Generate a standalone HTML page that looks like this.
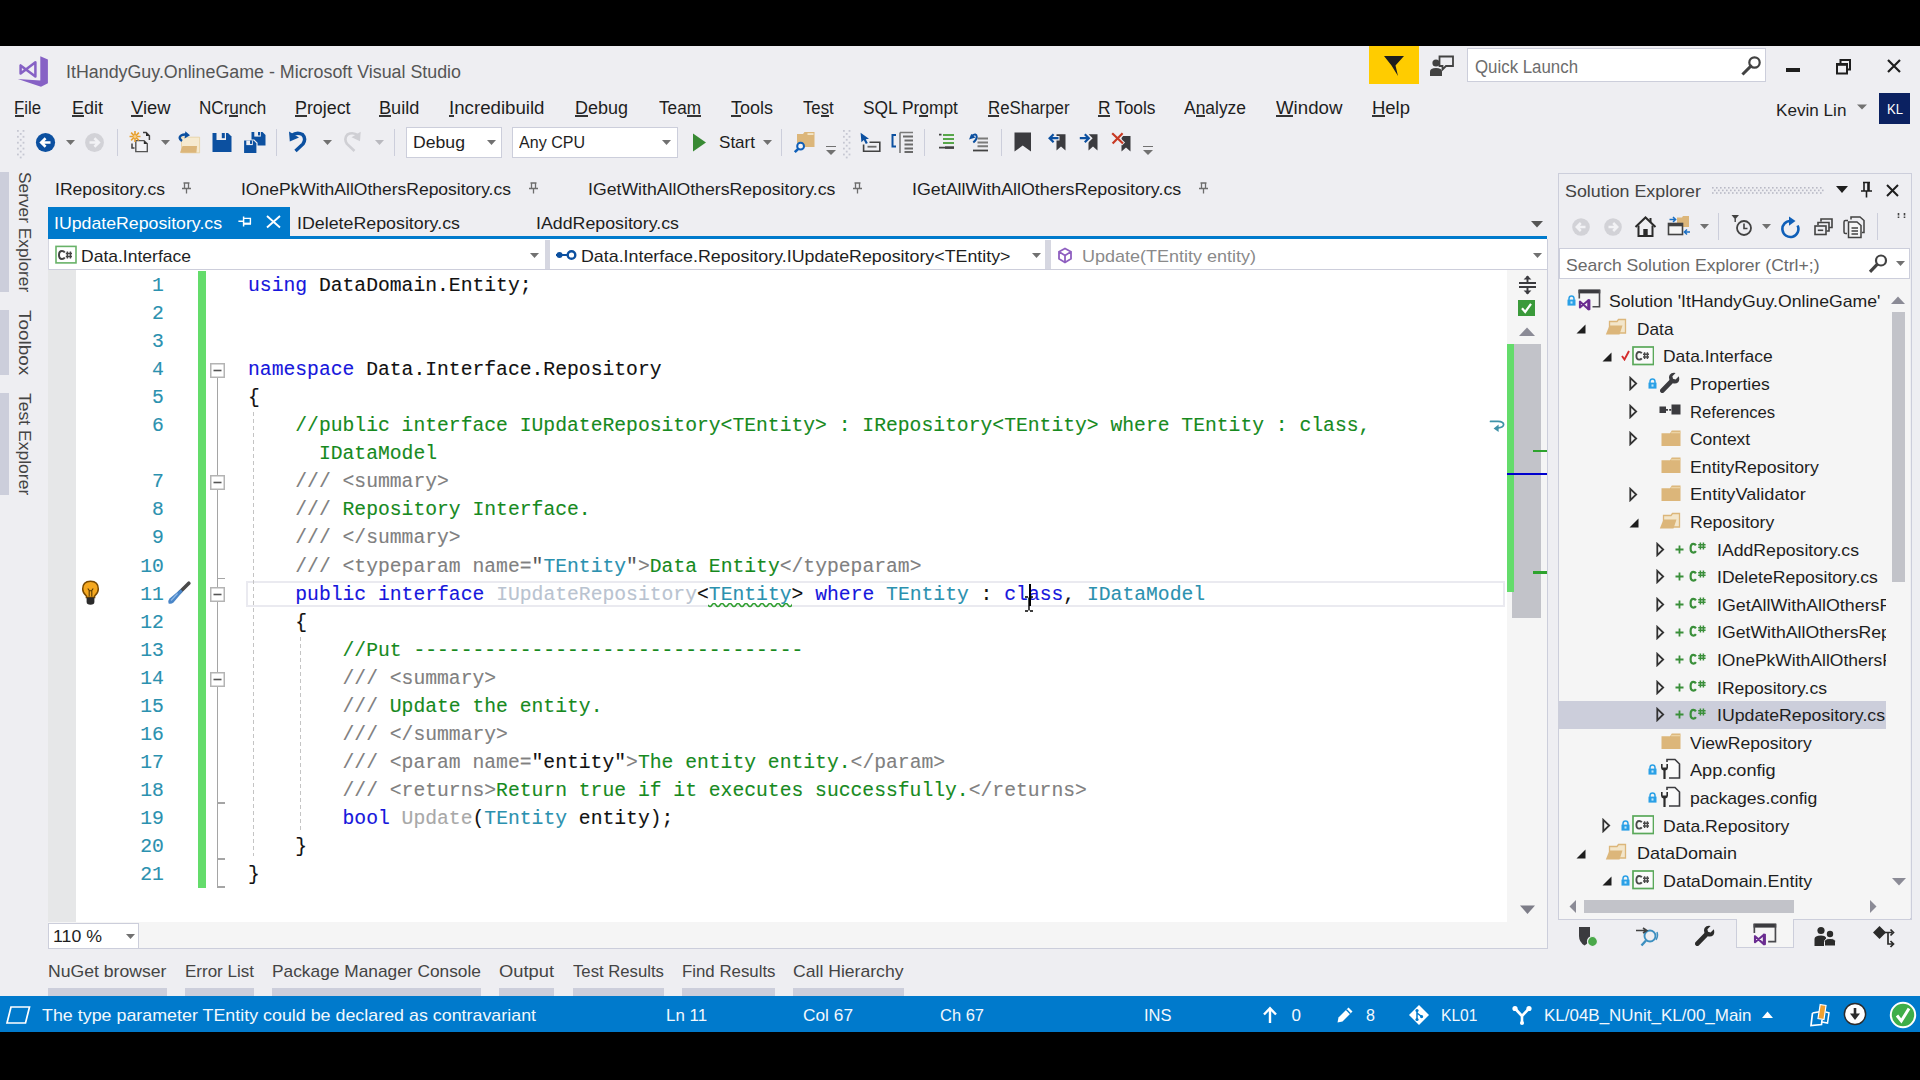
<!DOCTYPE html>
<html><head><meta charset="utf-8"><title>ItHandyGuy.OnlineGame - Microsoft Visual Studio</title>
<style>
html,body{margin:0;padding:0;background:#000;}
body{width:1920px;height:1080px;position:relative;overflow:hidden;font-family:"Liberation Sans",sans-serif;}
.b{position:absolute;display:block;}
.t{position:absolute;white-space:pre;line-height:1;transform-origin:0 0;font-family:"Liberation Sans",sans-serif;}
.c{position:absolute;white-space:pre;line-height:28px;height:28px;font-family:"Liberation Mono",monospace;font-size:19.7px;color:#111;-webkit-text-stroke:0.12px;}
.k{color:#1616dc}.q{color:#555}.ty{color:#2b91af}.cm{color:#178a1e}.x{color:#808080}.d1{color:#b9c3d0}.d2{color:#a8a8a8}
</style></head><body>
<div class="b" style="left:0px;top:46px;width:1920px;height:986px;background:#eeeef2;"></div>
<svg class="b" style="left:17px;top:55px;" width="32" height="33" viewBox="0 0 32 33"><path d="M0.8 24 L23.3 25.4 V1.2 L30.9 4.5 V28.3 L24 31.8 Z" fill="#8661c5"/>
<path d="M3.6 10.4 V18.6 L18.4 7.2 V21.4 Z" fill="none" stroke="#8661c5" stroke-width="2.5" stroke-linejoin="round"/></svg>
<div class="t " style="left:66.00px;top:63.00px;font-size:18px;color:#555;transform:scaleX(0.9912);">ItHandyGuy.OnlineGame - Microsoft Visual Studio</div>
<div class="b" style="left:1369px;top:46px;width:50px;height:38px;background:#ffcc00;"></div>
<svg class="b" style="left:1381px;top:53px;" width="26" height="26" viewBox="0 0 26 26"><path d="M3 3 H23 L14.5 12.5 L17 23 L10.5 12.5 Z" fill="#1e1e1e"/></svg>
<svg class="b" style="left:1429px;top:54px;" width="26" height="24" viewBox="0 0 26 24"><circle cx="7" cy="9" r="3.6" fill="#424242"/><path d="M1 22 V17.5 Q1 14 7 14 Q13 14 13 17.5 V22 Z" fill="#424242"/><path d="M10.5 2.5 H24 V12 H17 L13.5 15.5 V12 H10.5 Z" fill="none" stroke="#424242" stroke-width="1.8"/></svg>
<div class="b" style="left:1467px;top:48px;width:299px;height:34px;background:#fff;border:1px solid #cccedb;box-sizing:border-box;"></div>
<div class="t " style="left:1475.00px;top:59.00px;font-size:17.5px;color:#6d6d6d;transform:scaleX(0.9626);">Quick Launch</div>
<svg class="b" style="left:1740px;top:54px;" width="24" height="24" viewBox="0 0 24 24"><circle cx="14.5" cy="8.5" r="5.2" fill="none" stroke="#424242" stroke-width="2.2"/><path d="M10.8 12.2 L3.5 19.5" stroke="#424242" stroke-width="3" stroke-linecap="square"/></svg>
<div class="b" style="left:1786px;top:68px;width:14px;height:4px;background:#1e1e1e;"></div>
<svg class="b" style="left:1834px;top:57px;" width="20" height="20" viewBox="0 0 20 20"><path d="M6.5 6 V3 H16 V12.5 H13" fill="none" stroke="#1e1e1e" stroke-width="2"/><rect x="3" y="7" width="10" height="9.5" fill="none" stroke="#1e1e1e" stroke-width="2"/><path d="M3 7.5 H13" stroke="#1e1e1e" stroke-width="2.6"/></svg>
<svg class="b" style="left:1884px;top:56px;" width="20" height="20" viewBox="0 0 20 20"><path d="M4 4 L16 16 M16 4 L4 16" stroke="#1e1e1e" stroke-width="2.2"/></svg>
<div class="t " style="left:14.20px;top:100.00px;font-size:17.5px;color:#1e1e1e;transform:scaleX(0.9558);">File</div>
<div class="b" style="left:14.5px;top:115.3px;width:9.6px;height:1.5px;background:#333;"></div>
<div class="t " style="left:72.00px;top:100.00px;font-size:17.5px;color:#1e1e1e;transform:scaleX(1.0290);">Edit</div>
<div class="b" style="left:72.3px;top:115.3px;width:11.4px;height:1.5px;background:#333;"></div>
<div class="t " style="left:131.00px;top:100.00px;font-size:17.5px;color:#1e1e1e;transform:scaleX(1.0490);">View</div>
<div class="b" style="left:131.3px;top:115.3px;width:11.6px;height:1.5px;background:#333;"></div>
<div class="t " style="left:198.70px;top:100.00px;font-size:17.5px;color:#1e1e1e;transform:scaleX(0.9754);">NCrunch</div>
<div class="b" style="left:229.3px;top:115.3px;width:8.9px;height:1.5px;background:#333;"></div>
<div class="t " style="left:295.00px;top:100.00px;font-size:17.5px;color:#1e1e1e;transform:scaleX(1.0202);">Project</div>
<div class="b" style="left:295.3px;top:115.3px;width:11.3px;height:1.5px;background:#333;"></div>
<div class="t " style="left:378.70px;top:100.00px;font-size:17.5px;color:#1e1e1e;transform:scaleX(1.0367);">Build</div>
<div class="b" style="left:379.0px;top:115.3px;width:11.5px;height:1.5px;background:#333;"></div>
<div class="t " style="left:449.00px;top:100.00px;font-size:17.5px;color:#1e1e1e;transform:scaleX(1.0670);">Incredibuild</div>
<div class="b" style="left:449.3px;top:115.3px;width:4.6px;height:1.5px;background:#333;"></div>
<div class="t " style="left:575.00px;top:100.00px;font-size:17.5px;color:#1e1e1e;transform:scaleX(1.0266);">Debug</div>
<div class="b" style="left:575.3px;top:115.3px;width:12.4px;height:1.5px;background:#333;"></div>
<div class="t " style="left:659.00px;top:100.00px;font-size:17.5px;color:#1e1e1e;transform:scaleX(0.9825);">Team</div>
<div class="b" style="left:687.0px;top:115.3px;width:13.7px;height:1.5px;background:#333;"></div>
<div class="t " style="left:730.60px;top:100.00px;font-size:17.5px;color:#1e1e1e;transform:scaleX(1.0275);">Tools</div>
<div class="b" style="left:730.9px;top:115.3px;width:10.4px;height:1.5px;background:#333;"></div>
<div class="t " style="left:803.00px;top:100.00px;font-size:17.5px;color:#1e1e1e;transform:scaleX(0.9556);">Test</div>
<div class="b" style="left:821.0px;top:115.3px;width:7.8px;height:1.5px;background:#333;"></div>
<div class="t " style="left:862.60px;top:100.00px;font-size:17.5px;color:#1e1e1e;transform:scaleX(0.9924);">SQL Prompt</div>
<div class="b" style="left:919.2px;top:115.3px;width:9.1px;height:1.5px;background:#333;"></div>
<div class="t " style="left:987.50px;top:100.00px;font-size:17.5px;color:#1e1e1e;transform:scaleX(0.9631);">ReSharper</div>
<div class="b" style="left:987.8px;top:115.3px;width:11.6px;height:1.5px;background:#333;"></div>
<div class="t " style="left:1098.00px;top:100.00px;font-size:17.5px;color:#1e1e1e;transform:scaleX(0.9914);">R Tools</div>
<div class="b" style="left:1098.3px;top:115.3px;width:11.9px;height:1.5px;background:#333;"></div>
<div class="t " style="left:1184.00px;top:100.00px;font-size:17.5px;color:#1e1e1e;transform:scaleX(0.9960);">Analyze</div>
<div class="b" style="left:1195.9px;top:115.3px;width:9.1px;height:1.5px;background:#333;"></div>
<div class="t " style="left:1275.50px;top:100.00px;font-size:17.5px;color:#1e1e1e;transform:scaleX(1.0661);">Window</div>
<div class="b" style="left:1275.8px;top:115.3px;width:17.0px;height:1.5px;background:#333;"></div>
<div class="t " style="left:1372.00px;top:100.00px;font-size:17.5px;color:#1e1e1e;transform:scaleX(1.0556);">Help</div>
<div class="b" style="left:1372.3px;top:115.3px;width:12.7px;height:1.5px;background:#333;"></div>
<div class="t " style="left:1775.50px;top:102.00px;font-size:17px;color:#1e1e1e;transform:scaleX(1.0071);">Kevin Lin</div>
<svg class="b" style="left:1856px;top:103px;" width="12" height="8" viewBox="0 0 12 8"><path d="M1 1.5 H11 L6 6.5 Z" fill="#717171"/></svg>
<div class="b" style="left:1879px;top:93px;width:31px;height:31px;background:#0b2161;"></div>
<div class="t " style="left:1886.50px;top:102.00px;font-size:14px;color:#fff;transform:scaleX(0.9343);">KL</div>
<svg class="b" style="left:16.5px;top:129.5px;" width="8" height="29" viewBox="0 0 8 29"><rect x="0" y="0.0" width="1.8" height="1.8" fill="#c6c7d2"/><rect x="5.6" y="0.0" width="1.8" height="1.8" fill="#c6c7d2"/><rect x="2.8" y="3.0" width="1.8" height="1.8" fill="#c6c7d2"/><rect x="0" y="5.9" width="1.8" height="1.8" fill="#c6c7d2"/><rect x="5.6" y="5.9" width="1.8" height="1.8" fill="#c6c7d2"/><rect x="2.8" y="8.9" width="1.8" height="1.8" fill="#c6c7d2"/><rect x="0" y="11.8" width="1.8" height="1.8" fill="#c6c7d2"/><rect x="5.6" y="11.8" width="1.8" height="1.8" fill="#c6c7d2"/><rect x="2.8" y="14.8" width="1.8" height="1.8" fill="#c6c7d2"/><rect x="0" y="17.7" width="1.8" height="1.8" fill="#c6c7d2"/><rect x="5.6" y="17.7" width="1.8" height="1.8" fill="#c6c7d2"/><rect x="2.8" y="20.7" width="1.8" height="1.8" fill="#c6c7d2"/><rect x="0" y="23.6" width="1.8" height="1.8" fill="#c6c7d2"/><rect x="5.6" y="23.6" width="1.8" height="1.8" fill="#c6c7d2"/><rect x="2.8" y="26.6" width="1.8" height="1.8" fill="#c6c7d2"/></svg>
<svg class="b" style="left:35px;top:132px;" width="21" height="21" viewBox="0 0 21 21"><circle cx="10.5" cy="10.5" r="9.6" fill="#0c50a0"/><path d="M15.5 10.5 H6.8 M10.6 6.2 L6.2 10.5 L10.6 14.8" fill="none" stroke="#fff" stroke-width="2.6"/></svg>
<svg class="b" style="left:65.5px;top:139.5px;" width="9" height="5" viewBox="0 0 9 5"><path d="M0 0 H9 L4.5 5 Z" fill="#717171"/></svg>
<svg class="b" style="left:84px;top:132px;" width="21" height="21" viewBox="0 0 21 21"><circle cx="10.5" cy="10.5" r="9.4" fill="#d2d2d7"/><path d="M5.5 10.5 H14.2 M10.4 6.2 L14.8 10.5 L10.4 14.8" fill="none" stroke="#f2f2f5" stroke-width="2.6"/></svg>
<div class="b" style="left:116.5px;top:129px;width:1px;height:27px;background:#cccedb;"></div>
<svg class="b" style="left:128px;top:129px;" width="24" height="26" viewBox="0 0 24 26"><path d="M15 3.6 H18.2 L21.4 6.8 V11" fill="none" stroke="#424242" stroke-width="1.5"/><path d="M18 3.4 L21.6 7 H18 Z" fill="#2b2b2b"/>
<path d="M7.8 11.6 H16 L19.3 14.8 V22.6 H7.8 Z" fill="#f3f3f6" stroke="#555" stroke-width="1.4"/><path d="M15.8 11.4 L19.5 15 H15.8 Z" fill="#2b2b2b"/>
<path d="M4 14.5 V19 H6.5" fill="none" stroke="#424242" stroke-width="1.5"/>
<path d="M7 2 V13 M1.5 7.5 H12.5 M3.1 3.6 L10.9 11.4 M10.9 3.6 L3.1 11.4" stroke="#e8a030" stroke-width="1.6"/><circle cx="7" cy="7.5" r="1.6" fill="#f6cf86"/></svg>
<svg class="b" style="left:160.5px;top:139.5px;" width="9" height="5" viewBox="0 0 9 5"><path d="M0 0 H9 L4.5 5 Z" fill="#717171"/></svg>
<svg class="b" style="left:176px;top:129px;" width="26" height="26" viewBox="0 0 26 26"><path d="M5.5 8.2 H23.6 V23.8 H5.5 Z" fill="#f6ead0" stroke="#e6cf9e" stroke-width="0.8"/>
<path d="M4 23.8 L6.5 17 H21 L20.4 23.8 Z" fill="#dcb67a"/>
<path d="M6 12 Q1.5 8.8 5.5 6.3 Q7.5 5.2 10.5 5.6" fill="none" stroke="#0c50a0" stroke-width="2.4"/><path d="M9.3 2.2 L14 6.2 L8.6 9.6 Z" fill="#0c50a0"/></svg>
<svg class="b" style="left:212px;top:132px;" width="20" height="21" viewBox="0 0 20 21"><path d="M0.5 1 H16 L19.5 4.5 V20 H0.5 Z" fill="#0c50a0"/><rect x="4.5" y="1" width="9.5" height="7" fill="#eeeef2"/><rect x="9.8" y="1" width="3" height="5.2" fill="#0c50a0"/></svg>
<svg class="b" style="left:243px;top:131px;" width="23" height="23" viewBox="0 0 23 23"><path d="M8.5 1 H19.5 L22.5 4 V14.5 H8.5 Z" fill="#0c50a0"/><rect x="11.3" y="1" width="6.5" height="4.6" fill="#eeeef2"/><rect x="15" y="1" width="2" height="3.4" fill="#0c50a0"/>
<path d="M0.5 9 H11 L14 12 V22.5 H0.5 Z" fill="#0c50a0" stroke="#eeeef2" stroke-width="1.2"/><rect x="3.3" y="9.5" width="6.5" height="4.6" fill="#eeeef2"/><rect x="7" y="9.5" width="2" height="3.4" fill="#0c50a0"/></svg>
<div class="b" style="left:276px;top:129px;width:1px;height:27px;background:#cccedb;"></div>
<svg class="b" style="left:287px;top:130px;" width="23" height="23" viewBox="0 0 23 23"><path d="M4.5 5.5 Q10 1.5 15.5 4.5 Q19.5 8.5 16 14 L8.5 21" fill="none" stroke="#0c50a0" stroke-width="3.4"/><path d="M2 1.4 L2.8 11.6 L12 7.4 Z" fill="#0c50a0"/></svg>
<svg class="b" style="left:322.5px;top:139.5px;" width="9" height="5" viewBox="0 0 9 5"><path d="M0 0 H9 L4.5 5 Z" fill="#717171"/></svg>
<svg class="b" style="left:341px;top:130px;" width="22" height="23" viewBox="0 0 22 23"><path d="M17.5 5.5 Q12 1.5 6.5 4.5 Q2.5 8.5 6 14 L13.5 21" fill="none" stroke="#cfcfd4" stroke-width="2.6"/><path d="M19.7 1.8 L19 11.2 L10.5 7.2 Z" fill="#cfcfd4"/></svg>
<svg class="b" style="left:375.0px;top:139.5px;" width="9" height="5" viewBox="0 0 9 5"><path d="M0 0 H9 L4.5 5 Z" fill="#b9b9bf"/></svg>
<div class="b" style="left:394px;top:129px;width:1px;height:27px;background:#cccedb;"></div>
<div class="b" style="left:406px;top:127px;width:96px;height:31px;background:#fff;border:1px solid #cccedb;box-sizing:border-box;"></div>
<div class="t " style="left:412.50px;top:134.00px;font-size:17px;color:#1e1e1e;transform:scaleX(1.0374);">Debug</div>
<svg class="b" style="left:486.5px;top:139.5px;" width="9" height="5" viewBox="0 0 9 5"><path d="M0 0 H9 L4.5 5 Z" fill="#717171"/></svg>
<div class="b" style="left:512px;top:127px;width:166px;height:31px;background:#fff;border:1px solid #cccedb;box-sizing:border-box;"></div>
<div class="t " style="left:519.00px;top:134.00px;font-size:17px;color:#1e1e1e;transform:scaleX(0.9445);">Any CPU</div>
<svg class="b" style="left:661.5px;top:139.5px;" width="9" height="5" viewBox="0 0 9 5"><path d="M0 0 H9 L4.5 5 Z" fill="#717171"/></svg>
<svg class="b" style="left:692px;top:133px;" width="15" height="19" viewBox="0 0 15 19"><path d="M1 0.5 L14 9.5 L1 18.5 Z" fill="#388a34"/></svg>
<div class="t " style="left:719.00px;top:134.00px;font-size:17px;color:#1e1e1e;transform:scaleX(1.0035);">Start</div>
<svg class="b" style="left:762.5px;top:139.5px;" width="9" height="5" viewBox="0 0 9 5"><path d="M0 0 H9 L4.5 5 Z" fill="#717171"/></svg>
<div class="b" style="left:781px;top:129px;width:1px;height:27px;background:#cccedb;"></div>
<svg class="b" style="left:792px;top:131px;" width="24" height="24" viewBox="0 0 24 24"><path d="M5 3 H11 L12.5 1 H22.5 V16 H5 Z" fill="#dcb67a"/><rect x="15.5" y="2.2" width="6" height="1.7" fill="#f6ead0"/><circle cx="8.6" cy="15.2" r="3.4" fill="#f4f4f8" stroke="#0f5fb8" stroke-width="2"/><path d="M6.2 17.8 L2.8 21.2" stroke="#0f5fb8" stroke-width="2.6"/></svg>
<div class="b" style="left:826px;top:145.5px;width:10px;height:1.6px;background:#717171;"></div>
<svg class="b" style="left:826px;top:149.5px;" width="10" height="5" viewBox="0 0 10 5"><path d="M0 0 H10 L5 5 Z" fill="#717171"/></svg>
<svg class="b" style="left:842.6px;top:129.5px;" width="8" height="29" viewBox="0 0 8 29"><rect x="0" y="0.0" width="1.8" height="1.8" fill="#c6c7d2"/><rect x="5.6" y="0.0" width="1.8" height="1.8" fill="#c6c7d2"/><rect x="2.8" y="3.0" width="1.8" height="1.8" fill="#c6c7d2"/><rect x="0" y="5.9" width="1.8" height="1.8" fill="#c6c7d2"/><rect x="5.6" y="5.9" width="1.8" height="1.8" fill="#c6c7d2"/><rect x="2.8" y="8.9" width="1.8" height="1.8" fill="#c6c7d2"/><rect x="0" y="11.8" width="1.8" height="1.8" fill="#c6c7d2"/><rect x="5.6" y="11.8" width="1.8" height="1.8" fill="#c6c7d2"/><rect x="2.8" y="14.8" width="1.8" height="1.8" fill="#c6c7d2"/><rect x="0" y="17.7" width="1.8" height="1.8" fill="#c6c7d2"/><rect x="5.6" y="17.7" width="1.8" height="1.8" fill="#c6c7d2"/><rect x="2.8" y="20.7" width="1.8" height="1.8" fill="#c6c7d2"/><rect x="0" y="23.6" width="1.8" height="1.8" fill="#c6c7d2"/><rect x="5.6" y="23.6" width="1.8" height="1.8" fill="#c6c7d2"/><rect x="2.8" y="26.6" width="1.8" height="1.8" fill="#c6c7d2"/></svg>
<svg class="b" style="left:860px;top:132px;" width="22" height="22" viewBox="0 0 22 22"><path d="M0.6 0.8 L1.4 10.2 L3.8 8 L5.8 12 L7.8 11 L5.8 7.2 L9 6.8 Z" fill="#0c50a0"/><path d="M3.6 12.5 V19.2 H19.8 V10.2 H9.5" fill="none" stroke="#424242" stroke-width="1.6"/><path d="M7.5 14.7 H16.5" stroke="#6a6a6a" stroke-width="1.8"/></svg>
<svg class="b" style="left:891px;top:131px;" width="24" height="24" viewBox="0 0 24 24"><path d="M5 4 H1.5 V15.5 H5" fill="none" stroke="#0c50a0" stroke-width="2"/><path d="M9 1.5 H22 M9 1.5 V22" fill="none" stroke="#7a7a7a" stroke-width="1.6"/><path d="M12 5.5 H22 M13.5 9.5 H22 M13.5 13.5 H22 M13.5 17.5 H22 M13.5 21 H22" stroke="#6a6a6a" stroke-width="1.8"/></svg>
<div class="b" style="left:924px;top:129px;width:1px;height:27px;background:#cccedb;"></div>
<svg class="b" style="left:938px;top:133px;" width="18" height="17" viewBox="0 0 18 17"><path d="M1 1.6 H3.5 M1 14.6 H16" stroke="#424242" stroke-width="1.8"/><path d="M5 2 H16 M5 6 H16 M5 10 H16" stroke="#57a64a" stroke-width="2.2"/><path d="M7 14.6 H16" stroke="#424242" stroke-width="2.4"/></svg>
<svg class="b" style="left:967px;top:132px;" width="22" height="20" viewBox="0 0 22 20"><path d="M2 7.5 L4.2 2 L8.6 5.6 Z" fill="#0c50a0"/><path d="M4.5 4 Q9.5 0.5 9.8 5 Q9.8 7.5 6.3 10.5" fill="none" stroke="#0c50a0" stroke-width="2"/><path d="M10.5 6.5 H21 M10.5 10.5 H21 M10.5 14.3 H21" stroke="#7a7a7a" stroke-width="2"/><path d="M6 18.5 H21" stroke="#424242" stroke-width="1.8"/></svg>
<div class="b" style="left:1001px;top:129px;width:1px;height:27px;background:#cccedb;"></div>
<svg class="b" style="left:1014px;top:132px;" width="18" height="20" viewBox="0 0 18 20"><path d="M0.5 0.5 H17 V19.5 L8.7 13.6 L0.5 19.5 Z" fill="#3b3b3f"/></svg>
<svg class="b" style="left:1048px;top:133px;" width="19" height="18" viewBox="0 0 19 18"><path d="M8.5 1.2 H17.5 V17.5 L13 13.4 L8.5 17.5 Z" fill="#3b3b3f"/><path d="M1 5.2 H11.5 M5.5 0.8 L1.2 5.2 L5.5 9.6" fill="none" stroke="#eeeef2" stroke-width="4.6"/><path d="M1.6 5.2 H10.5 M5.6 1.2 L1.6 5.2 L5.6 9.2" fill="none" stroke="#0c50a0" stroke-width="2.2"/></svg>
<svg class="b" style="left:1079px;top:133px;" width="20" height="18" viewBox="0 0 20 18"><path d="M9.5 1.2 H18.5 V17.5 L14 13.4 L9.5 17.5 Z" fill="#3b3b3f"/><path d="M0 5.2 H10.5 M6 0.8 L10.4 5.2 L6 9.6" fill="none" stroke="#eeeef2" stroke-width="4.6"/><path d="M0.8 5.2 H9.6 M5.8 1.2 L9.8 5.2 L5.8 9.2" fill="none" stroke="#0c50a0" stroke-width="2.2"/></svg>
<svg class="b" style="left:1111px;top:132px;" width="21" height="20" viewBox="0 0 21 20"><path d="M10.5 4 H19.5 V19.5 L15 15.6 L10.5 19.5 Z" fill="#3b3b3f"/><path d="M1 1 L12.5 12 M12 1 L1.5 12" stroke="#eeeef2" stroke-width="4.4"/><path d="M1.2 1.2 L12 11.5 M11.6 1.2 L1.6 11.5" stroke="#c83a24" stroke-width="2.2"/></svg>
<div class="b" style="left:1143px;top:145.5px;width:10px;height:1.6px;background:#717171;"></div>
<svg class="b" style="left:1143px;top:149.5px;" width="10" height="5" viewBox="0 0 10 5"><path d="M0 0 H10 L5 5 Z" fill="#717171"/></svg>
<div class="b" style="left:0px;top:172px;width:9px;height:120px;background:#cccedb;"></div>
<div class="t" style="left:33.27px;top:172.40px;font-size:16.5px;color:#444;transform:rotate(90deg) scaleX(1.0486);">Server Explorer</div>
<div class="b" style="left:0px;top:310px;width:9px;height:65px;background:#cccedb;"></div>
<div class="t" style="left:33.27px;top:310.40px;font-size:16.5px;color:#444;transform:rotate(90deg) scaleX(1.1464);">Toolbox</div>
<div class="b" style="left:0px;top:393px;width:9px;height:102px;background:#cccedb;"></div>
<div class="t" style="left:33.27px;top:393.40px;font-size:16.5px;color:#444;transform:rotate(90deg) scaleX(1.0618);">Test Explorer</div>
<div class="t " style="left:55.00px;top:181.00px;font-size:17px;color:#1e1e1e;transform:scaleX(1.0329);">IRepository.cs</div>
<svg class="b" style="left:180.5px;top:182px;" width="11" height="12" viewBox="0 0 11 12"><path d="M2.5 1 H8.5 M3.5 1 V6 M7.5 1 V6 M1 6.5 H10 M5.5 6.5 V11.5" fill="none" stroke="#6d6d6d" stroke-width="1.3"/></svg>
<div class="t " style="left:241.00px;top:181.00px;font-size:17px;color:#1e1e1e;transform:scaleX(1.0291);">IOnePkWithAllOthersRepository.cs</div>
<svg class="b" style="left:527.5px;top:182px;" width="11" height="12" viewBox="0 0 11 12"><path d="M2.5 1 H8.5 M3.5 1 V6 M7.5 1 V6 M1 6.5 H10 M5.5 6.5 V11.5" fill="none" stroke="#6d6d6d" stroke-width="1.3"/></svg>
<div class="t " style="left:587.70px;top:181.00px;font-size:17px;color:#1e1e1e;transform:scaleX(1.0402);">IGetWithAllOthersRepository.cs</div>
<svg class="b" style="left:851.5px;top:182px;" width="11" height="12" viewBox="0 0 11 12"><path d="M2.5 1 H8.5 M3.5 1 V6 M7.5 1 V6 M1 6.5 H10 M5.5 6.5 V11.5" fill="none" stroke="#6d6d6d" stroke-width="1.3"/></svg>
<div class="t " style="left:911.50px;top:181.00px;font-size:17px;color:#1e1e1e;transform:scaleX(1.0490);">IGetAllWithAllOthersRepository.cs</div>
<svg class="b" style="left:1197.5px;top:182px;" width="11" height="12" viewBox="0 0 11 12"><path d="M2.5 1 H8.5 M3.5 1 V6 M7.5 1 V6 M1 6.5 H10 M5.5 6.5 V11.5" fill="none" stroke="#6d6d6d" stroke-width="1.3"/></svg>
<div class="b" style="left:48px;top:207px;width:242px;height:30px;background:#007acc;"></div>
<div class="t " style="left:54.00px;top:215.00px;font-size:17px;color:#fff;transform:scaleX(1.0419);">IUpdateRepository.cs</div>
<svg class="b" style="left:238px;top:216px;" width="14" height="11" viewBox="0 0 14 11"><path d="M0.4 5.3 H5.6 M5.6 0.6 V10.4" fill="none" stroke="#fff" stroke-width="1.5"/><path d="M5.6 2.4 H12.4 V7.4 H5.6" fill="none" stroke="#fff" stroke-width="1.4"/><path d="M5.6 7.8 H13" stroke="#fff" stroke-width="2"/></svg>
<svg class="b" style="left:265.5px;top:215.3px;" width="15" height="13.5" viewBox="0 0 15 13.5"><path d="M1 1 L14 12.5 M14 1 L1 12.5" stroke="#fff" stroke-width="1.9"/></svg>
<div class="t " style="left:297.00px;top:215.00px;font-size:17px;color:#1e1e1e;transform:scaleX(1.0474);">IDeleteRepository.cs</div>
<div class="t " style="left:536.00px;top:215.00px;font-size:17px;color:#1e1e1e;transform:scaleX(1.0457);">IAddRepository.cs</div>
<svg class="b" style="left:1531px;top:220.5px;" width="12" height="7" viewBox="0 0 12 7"><path d="M0 0 H12 L6 6.5 Z" fill="#555"/></svg>
<div class="b" style="left:48px;top:236px;width:1499px;height:2.6px;background:#007acc;"></div>
<div class="b" style="left:48px;top:238.6px;width:1499px;height:31.4px;background:#fff;"></div>
<div class="b" style="left:48px;top:269px;width:1499px;height:1.8px;background:#cdcedb;"></div>
<div class="b" style="left:48px;top:239px;width:1px;height:31px;background:#d5d6e0;"></div>
<div class="b" style="left:544.5px;top:240px;width:5.5px;height:29px;background:#d6d7e1;"></div>
<div class="b" style="left:1045px;top:240px;width:5.5px;height:29px;background:#d6d7e1;"></div>
<svg class="b" style="left:55px;top:245px;" width="22" height="20" viewBox="0 0 22 20"><rect x="1" y="1.4" width="20" height="16.5" fill="#fff" stroke="#68b268" stroke-width="1.6"/><path d="M9.8 7.5 Q8.8 6 7 6 Q4 6 4 10 Q4 14 7 14 Q8.8 14 9.8 12.5" fill="none" stroke="#424242" stroke-width="2"/><path d="M12.4 6.5 V13.5 M15.4 6.5 V13.5 M10.8 8.6 H17 M10.8 11.4 H17" stroke="#424242" stroke-width="1.5"/></svg>
<div class="t " style="left:81.00px;top:248.00px;font-size:17px;color:#1e1e1e;transform:scaleX(1.0304);">Data.Interface</div>
<svg class="b" style="left:530.1px;top:252.5px;" width="9" height="5" viewBox="0 0 9 5"><path d="M0 0 H9 L4.5 5 Z" fill="#717171"/></svg>
<svg class="b" style="left:555px;top:249px;" width="23" height="12" viewBox="0 0 23 12"><path d="M1 6 H13" stroke="#0c50a0" stroke-width="2"/><circle cx="4.5" cy="6" r="3" fill="#0c50a0"/><circle cx="16.5" cy="6" r="3.8" fill="#fff" stroke="#0c50a0" stroke-width="2.4"/></svg>
<div class="t " style="left:581.00px;top:248.00px;font-size:17px;color:#1e1e1e;transform:scaleX(1.0482);">Data.Interface.Repository.IUpdateRepository&lt;TEntity&gt;</div>
<svg class="b" style="left:1031.5px;top:252.5px;" width="9" height="5" viewBox="0 0 9 5"><path d="M0 0 H9 L4.5 5 Z" fill="#717171"/></svg>
<svg class="b" style="left:1056.5px;top:246.5px;" width="16" height="17" viewBox="0 0 16 17"><path d="M8 1.5 L14 4.8 V11.8 L8 15.5 L2 11.8 V4.8 Z M2.4 5 L8 8.4 L13.6 5 M8 8.4 V15" fill="none" stroke="#8f5fc0" stroke-width="1.8"/></svg>
<div class="t " style="left:1082.00px;top:248.00px;font-size:17px;color:#8a8a8a;transform:scaleX(1.0586);">Update(TEntity entity)</div>
<svg class="b" style="left:1532.5px;top:252.5px;" width="9" height="5" viewBox="0 0 9 5"><path d="M0 0 H9 L4.5 5 Z" fill="#717171"/></svg>
<div class="b" style="left:48px;top:270px;width:1499px;height:652px;background:#fff;"></div>
<div class="b" style="left:48px;top:270px;width:28px;height:652px;background:#e6e7e8;"></div>
<div class="b" style="left:198px;top:271px;width:8px;height:617px;background:#64dc6b;"></div>
<div class="b" style="left:246px;top:580.9px;width:1259px;height:26.5px;background:#fff;border:2px solid #eaeaf0;box-sizing:border-box;"></div>
<div class="c ty" style="left:151.98px;top:272.00px;">1</div>
<div class="c ty" style="left:151.98px;top:300.05px;">2</div>
<div class="c ty" style="left:151.98px;top:328.10px;">3</div>
<div class="c ty" style="left:151.98px;top:356.15px;">4</div>
<div class="c ty" style="left:151.98px;top:384.20px;">5</div>
<div class="c ty" style="left:151.98px;top:412.25px;">6</div>
<div class="c ty" style="left:151.98px;top:468.35px;">7</div>
<div class="c ty" style="left:151.98px;top:496.40px;">8</div>
<div class="c ty" style="left:151.98px;top:524.45px;">9</div>
<div class="c ty" style="left:140.16px;top:552.50px;">10</div>
<div class="c ty" style="left:140.16px;top:580.55px;">11</div>
<div class="c ty" style="left:140.16px;top:608.60px;">12</div>
<div class="c ty" style="left:140.16px;top:636.65px;">13</div>
<div class="c ty" style="left:140.16px;top:664.70px;">14</div>
<div class="c ty" style="left:140.16px;top:692.75px;">15</div>
<div class="c ty" style="left:140.16px;top:720.80px;">16</div>
<div class="c ty" style="left:140.16px;top:748.85px;">17</div>
<div class="c ty" style="left:140.16px;top:776.90px;">18</div>
<div class="c ty" style="left:140.16px;top:804.95px;">19</div>
<div class="c ty" style="left:140.16px;top:833.00px;">20</div>
<div class="c ty" style="left:140.16px;top:861.05px;">21</div>
<div class="c" style="left:248px;top:272.00px;"><span class="k">using</span> DataDomain.Entity;</div>
<div class="c" style="left:248px;top:356.15px;"><span class="k">namespace</span> Data.Interface.Repository</div>
<div class="c" style="left:248px;top:384.20px;">{</div>
<div class="c" style="left:248px;top:412.25px;">    <span class="cm">//public interface IUpdateRepository&lt;TEntity&gt; : IRepository&lt;TEntity&gt; where TEntity : class,</span></div>
<div class="c" style="left:248px;top:440.30px;">      <span class="cm">IDataModel</span></div>
<div class="c" style="left:248px;top:468.35px;">    <span class="x">/// &lt;summary&gt;</span></div>
<div class="c" style="left:248px;top:496.40px;">    <span class="x">/// </span><span class="cm">Repository Interface.</span></div>
<div class="c" style="left:248px;top:524.45px;">    <span class="x">/// &lt;/summary&gt;</span></div>
<div class="c" style="left:248px;top:552.50px;">    <span class="x">/// &lt;typeparam name=</span><span class="q">&quot;</span><span class="ty">TEntity</span><span class="q">&quot;</span><span class="x">&gt;</span><span class="cm">Data Entity</span><span class="x">&lt;/typeparam&gt;</span></div>
<div class="c" style="left:248px;top:580.55px;">    <span class="k">public</span> <span class="k">interface</span> <span class="d1">IUpdateRepository</span>&lt;<span class="ty">TEntity</span>&gt; <span class="k">where</span> <span class="ty">TEntity</span> : <span class="k">class</span>, <span class="ty">IDataModel</span></div>
<div class="c" style="left:248px;top:608.60px;">    {</div>
<div class="c" style="left:248px;top:636.65px;">        <span class="cm">//Put ---------------------------------</span></div>
<div class="c" style="left:248px;top:664.70px;">        <span class="x">/// &lt;summary&gt;</span></div>
<div class="c" style="left:248px;top:692.75px;">        <span class="x">/// </span><span class="cm">Update the entity.</span></div>
<div class="c" style="left:248px;top:720.80px;">        <span class="x">/// &lt;/summary&gt;</span></div>
<div class="c" style="left:248px;top:748.85px;">        <span class="x">/// &lt;param name=</span>&quot;entity&quot;<span class="x">&gt;</span><span class="cm">The entity entity.</span><span class="x">&lt;/param&gt;</span></div>
<div class="c" style="left:248px;top:776.90px;">        <span class="x">/// &lt;returns&gt;</span><span class="cm">Return true if it executes successfully.</span><span class="x">&lt;/returns&gt;</span></div>
<div class="c" style="left:248px;top:804.95px;">        <span class="k">bool</span> <span class="d2">Update</span>(<span class="ty">TEntity</span> entity);</div>
<div class="c" style="left:248px;top:833.00px;">    }</div>
<div class="c" style="left:248px;top:861.05px;">}</div>
<svg class="b" style="left:708px;top:602.5px;overflow:hidden;" width="84" height="6" viewBox="0 0 84 6"><path d="M0 2 q2 3 4 0 q2 -3 4 0 q2 3 4 0 q2 -3 4 0 q2 3 4 0 q2 -3 4 0 q2 3 4 0 q2 -3 4 0 q2 3 4 0 q2 -3 4 0 q2 3 4 0 q2 -3 4 0 q2 3 4 0 q2 -3 4 0 q2 3 4 0 q2 -3 4 0 q2 3 4 0 q2 -3 4 0 q2 3 4 0 q2 -3 4 0 q2 3 4 0 q2 -3 4 0" fill="none" stroke="#2e9e2e" stroke-width="1.5"/></svg>
<div class="b" style="left:1029px;top:583.5px;width:2px;height:22px;background:#000;"></div>
<svg class="b" style="left:1024px;top:596px;" width="10" height="16" viewBox="0 0 10 16"><path d="M1 1 H4 M6 1 H9 M5 1.5 V14.5 M1 15 H4 M6 15 H9" stroke="#000" stroke-width="1.4" fill="none"/></svg>
<div class="b" style="left:217px;top:377.1px;width:1.4px;height:509.9px;background:#a5a5a5;"></div>
<div class="b" style="left:217px;top:886.4px;width:8px;height:1.4px;background:#a5a5a5;"></div>
<div class="b" style="left:217px;top:577.8px;width:8px;height:1.4px;background:#a5a5a5;"></div>
<div class="b" style="left:217px;top:802.2px;width:8px;height:1.4px;background:#a5a5a5;"></div>
<div class="b" style="left:217px;top:858.3px;width:8px;height:1.4px;background:#a5a5a5;"></div>
<svg class="b" style="left:210px;top:362.9px;" width="15" height="15" viewBox="0 0 15 15"><rect x="0.75" y="0.75" width="13.5" height="13.5" fill="#fff" stroke="#b4b4b4" stroke-width="1.5"/><path d="M3.5 7.5 H11.5" stroke="#555" stroke-width="1.6"/></svg>
<svg class="b" style="left:210px;top:475.2px;" width="15" height="15" viewBox="0 0 15 15"><rect x="0.75" y="0.75" width="13.5" height="13.5" fill="#fff" stroke="#b4b4b4" stroke-width="1.5"/><path d="M3.5 7.5 H11.5" stroke="#555" stroke-width="1.6"/></svg>
<svg class="b" style="left:210px;top:587.3px;" width="15" height="15" viewBox="0 0 15 15"><rect x="0.75" y="0.75" width="13.5" height="13.5" fill="#fff" stroke="#b4b4b4" stroke-width="1.5"/><path d="M3.5 7.5 H11.5" stroke="#555" stroke-width="1.6"/></svg>
<svg class="b" style="left:210px;top:671.5px;" width="15" height="15" viewBox="0 0 15 15"><rect x="0.75" y="0.75" width="13.5" height="13.5" fill="#fff" stroke="#b4b4b4" stroke-width="1.5"/><path d="M3.5 7.5 H11.5" stroke="#555" stroke-width="1.6"/></svg>
<div class="b" style="left:252.8px;top:412.2px;width:1.3px;height:443.8px;background:repeating-linear-gradient(to bottom,#c4c4c4 0,#c4c4c4 4px,transparent 4px,transparent 7px);"></div>
<div class="b" style="left:299.8px;top:636.7px;width:1.3px;height:195.8px;background:repeating-linear-gradient(to bottom,#c4c4c4 0,#c4c4c4 4px,transparent 4px,transparent 7px);"></div>
<svg class="b" style="left:1489px;top:419px;" width="17" height="15" viewBox="0 0 17 15"><path d="M1.5 2.4 H9 Q14.6 2.6 14.6 5.6 Q14.4 8.4 9 8.8" fill="none" stroke="#3f92a8" stroke-width="1.7" stroke-linecap="round"/><path d="M9.6 5.6 L4.6 9.4 L9.6 13 Z" fill="#3f92a8"/></svg>
<svg class="b" style="left:81px;top:580px;" width="19" height="26" viewBox="0 0 19 26"><path d="M9.5 1.2 Q17.3 1.2 17.3 9 Q17.3 12.8 13.6 16 V17.5 H5.4 V16 Q1.7 12.8 1.7 9 Q1.7 1.2 9.5 1.2 Z" fill="#f5a81f" stroke="#7a4a00" stroke-width="1.5"/><path d="M8.2 16.5 V10.5 L6.8 8.5 M10.8 16.5 V10.5 L12.2 8.5 M8.2 10.8 H10.8" fill="none" stroke="#5a3a00" stroke-width="1.1"/><path d="M5.6 17.5 H13.4 V22 Q13.4 24.8 9.5 24.8 Q5.6 24.8 5.6 22 Z" fill="#2b2b2b"/></svg>
<svg class="b" style="left:166px;top:581px;" width="25" height="25" viewBox="0 0 25 25"><path d="M22.8 2.2 L13.5 11.5" stroke="#4a4a4a" stroke-width="3.6" stroke-linecap="round"/><path d="M14.6 8.2 L16.8 10.4 L7.5 21.4 Q5 23.6 2.6 22.4 Q1.4 20 3.6 17.5 Z" fill="#4a86c8"/><path d="M5 19.5 L11.5 12.5" stroke="#8fb8e6" stroke-width="1.2"/></svg>
<div class="b" style="left:1507px;top:270px;width:40px;height:653px;background:#f5f5f5;"></div>
<div class="b" style="left:1547px;top:239px;width:1px;height:710px;background:#cccedb;"></div>
<svg class="b" style="left:1517.5px;top:274.5px;" width="19" height="20" viewBox="0 0 19 20"><path d="M1 8 H18 M1 12 H18" stroke="#3b3b3f" stroke-width="2"/><path d="M9.5 1 V7 M9.5 13 V19" stroke="#3b3b3f" stroke-width="1.9"/><path d="M5.6 4.6 L9.5 0.4 L13.4 4.6 Z M5.6 15.4 L9.5 19.6 L13.4 15.4 Z" fill="#3b3b3f"/></svg>
<div class="b" style="left:1518px;top:300px;width:17px;height:16px;background:#3a9a3a;"></div>
<svg class="b" style="left:1518px;top:300px;" width="17" height="16" viewBox="0 0 17 16"><path d="M4 8.2 L7.2 12 L13 3.8" fill="none" stroke="#fff" stroke-width="2.2"/></svg>
<svg class="b" style="left:1519px;top:327px;" width="16" height="9" viewBox="0 0 16 9"><path d="M0 9 L8 0.5 L16 9 Z" fill="#8b8b96"/></svg>
<div class="b" style="left:1512px;top:344px;width:29px;height:274px;background:#c2c3c9;"></div>
<div class="b" style="left:1507px;top:344px;width:7px;height:248px;background:#64dc6b;"></div>
<div class="b" style="left:1533px;top:449.5px;width:14px;height:2.6px;background:#2ea32e;"></div>
<div class="b" style="left:1533px;top:571px;width:14px;height:2.6px;background:#2ea32e;"></div>
<div class="b" style="left:1507px;top:473px;width:40px;height:2.2px;background:#0000cd;"></div>
<svg class="b" style="left:1520px;top:905px;" width="15" height="9" viewBox="0 0 15 9"><path d="M0 0.5 H15 L7.5 9 Z" fill="#7d7d88"/></svg>
<div class="b" style="left:48px;top:922px;width:1499px;height:27px;background:#f5f5f5;"></div>
<div class="b" style="left:48px;top:948px;width:1500px;height:1px;background:#cccedb;"></div>
<div class="b" style="left:48px;top:923px;width:91px;height:26px;background:#fff;border:1px solid #cccedb;box-sizing:border-box;"></div>
<div class="t " style="left:53.00px;top:928.00px;font-size:17px;color:#1e1e1e;transform:scaleX(1.0426);">110 %</div>
<svg class="b" style="left:125.5px;top:934.0px;" width="9" height="5" viewBox="0 0 9 5"><path d="M0 0 H9 L4.5 5 Z" fill="#717171"/></svg>
<div class="t " style="left:48.00px;top:963.00px;font-size:17px;color:#444;transform:scaleX(1.0361);">NuGet browser</div>
<div class="b" style="left:48px;top:988px;width:118.5px;height:8px;background:#cccedb;"></div>
<div class="t " style="left:185.00px;top:963.00px;font-size:17px;color:#444;transform:scaleX(1.0000);">Error List</div>
<div class="b" style="left:185px;top:988px;width:69px;height:8px;background:#cccedb;"></div>
<div class="t " style="left:272.00px;top:963.00px;font-size:17px;color:#444;transform:scaleX(1.0189);">Package Manager Console</div>
<div class="b" style="left:272px;top:988px;width:209px;height:8px;background:#cccedb;"></div>
<div class="t " style="left:499.00px;top:963.00px;font-size:17px;color:#444;transform:scaleX(1.0784);">Output</div>
<div class="b" style="left:499px;top:988px;width:55px;height:8px;background:#cccedb;"></div>
<div class="t " style="left:572.50px;top:963.00px;font-size:17px;color:#444;transform:scaleX(0.9825);">Test Results</div>
<div class="b" style="left:572.5px;top:988px;width:91.0px;height:8px;background:#cccedb;"></div>
<div class="t " style="left:681.50px;top:963.00px;font-size:17px;color:#444;transform:scaleX(0.9894);">Find Results</div>
<div class="b" style="left:681.5px;top:988px;width:93.5px;height:8px;background:#cccedb;"></div>
<div class="t " style="left:793.00px;top:963.00px;font-size:17px;color:#444;transform:scaleX(1.0351);">Call Hierarchy</div>
<div class="b" style="left:793px;top:988px;width:110.5px;height:8px;background:#cccedb;"></div>
<div class="b" style="left:0px;top:996px;width:1920px;height:36px;background:#007acc;"></div>
<svg class="b" style="left:5px;top:1005px;" width="26" height="20" viewBox="0 0 26 20"><path d="M6 2 H24.5 L20.5 18 H2 Z" fill="none" stroke="#fff" stroke-width="1.7"/></svg>
<div class="t " style="left:42.00px;top:1007.00px;font-size:17px;color:#f2f8fd;transform:scaleX(1.0505);">The type parameter TEntity could be declared as contravariant</div>
<div class="t " style="left:666.00px;top:1007.00px;font-size:17px;color:#f2f8fd;transform:scaleX(0.9939);">Ln 11</div>
<div class="t " style="left:803.00px;top:1007.00px;font-size:17px;color:#f2f8fd;transform:scaleX(1.0178);">Col 67</div>
<div class="t " style="left:940.00px;top:1007.00px;font-size:17px;color:#f2f8fd;transform:scaleX(0.9697);">Ch 67</div>
<div class="t " style="left:1143.50px;top:1007.00px;font-size:17px;color:#f2f8fd;transform:scaleX(0.9692);">INS</div>
<svg class="b" style="left:1262px;top:1006px;" width="16" height="18" viewBox="0 0 16 18"><path d="M8 17 V3 M2 8.5 L8 2.2 L14 8.5" fill="none" stroke="#fff" stroke-width="2.4"/></svg>
<div class="t " style="left:1291.50px;top:1007.00px;font-size:17px;color:#f2f8fd;transform:scaleX(1.0000);">0</div>
<svg class="b" style="left:1336px;top:1006px;" width="18" height="18" viewBox="0 0 18 18"><path d="M12.5 1.5 L16.5 5.5 L6.5 15.5 L1.5 16.5 L2.5 11.5 Z" fill="#fff"/><path d="M10.3 3.6 L14.4 7.7" stroke="#007acc" stroke-width="1.4"/></svg>
<div class="t " style="left:1366.00px;top:1007.00px;font-size:17px;color:#f2f8fd;transform:scaleX(0.9474);">8</div>
<svg class="b" style="left:1408px;top:1004px;" width="22" height="22" viewBox="0 0 22 22"><path d="M11 1 L21 11 L11 21 L1 11 Z" fill="#fff"/><path d="M9 6 V16 M9 9 L13.5 12.5" stroke="#007acc" stroke-width="1.5" fill="none"/><circle cx="9" cy="6.5" r="1.6" fill="#007acc"/><circle cx="9" cy="15.5" r="1.6" fill="#007acc"/><circle cx="13.6" cy="12.6" r="1.6" fill="#007acc"/></svg>
<div class="t " style="left:1441.00px;top:1007.00px;font-size:17px;color:#f2f8fd;transform:scaleX(0.9182);">KL01</div>
<svg class="b" style="left:1511px;top:1004px;" width="22" height="22" viewBox="0 0 22 22"><path d="M11 20 V12 M11 12 L4.5 5 M11 12 L17.5 5" fill="none" stroke="#fff" stroke-width="2.6"/><circle cx="4" cy="4.5" r="2.6" fill="#fff"/><circle cx="18" cy="4.5" r="2.6" fill="#fff"/><circle cx="11" cy="19" r="2" fill="#fff"/></svg>
<div class="t " style="left:1544.00px;top:1007.00px;font-size:17px;color:#f2f8fd;transform:scaleX(0.9982);">KL/04B_NUnit_KL/00_Main</div>
<svg class="b" style="left:1762px;top:1011px;" width="11" height="7" viewBox="0 0 11 7"><path d="M0 7 L5.5 0.5 L11 7 Z" fill="#fff"/></svg>
<svg class="b" style="left:1808px;top:1002px;" width="24" height="26" viewBox="0 0 24 26"><path d="M4.5 11 L13 9.5 M4.5 11 L3 23.5 L13.5 22.5 L14 18" fill="none" stroke="#fff" stroke-width="1.7"/><path d="M12.2 2.5 L18 3.5 L16 17.5 L10 16.5 Z" fill="#f0a030" stroke="#fff" stroke-width="1.2"/><path d="M17.5 10 L21 10.8 L19.5 21 L14 20" fill="none" stroke="#fff" stroke-width="1.5"/></svg>
<svg class="b" style="left:1843px;top:1002px;" width="24" height="24" viewBox="0 0 24 24"><circle cx="12" cy="12" r="10.6" fill="#fff" stroke="#2b2b2b" stroke-width="1.5"/><path d="M12 6 V13" stroke="#2b2b2b" stroke-width="2.6"/><path d="M7 11.5 H17 L12 18 Z" fill="#2b2b2b"/></svg>
<svg class="b" style="left:1889px;top:1001px;" width="28" height="28" viewBox="0 0 28 28"><circle cx="14" cy="14" r="12.2" fill="#3fae49" stroke="#fff" stroke-width="2"/><path d="M8 14.5 L12.3 20 L20 7.5" fill="none" stroke="#fff" stroke-width="3"/></svg>
<div class="b" style="left:1558px;top:173px;width:354px;height:746px;background:#eeeef2;border:1px solid #cccedb;box-sizing:border-box;"></div>
<div class="t " style="left:1564.50px;top:183.00px;font-size:17px;color:#444;transform:scaleX(1.0494);">Solution Explorer</div>
<svg class="b" style="left:1712px;top:186.5px;" width="112" height="8" viewBox="0 0 112 8"><rect x="0" y="0" width="1.6" height="1.6" fill="#b9bac6"/><rect x="2" y="2.6" width="1.6" height="1.6" fill="#b9bac6"/><rect x="0" y="5.2" width="1.6" height="1.6" fill="#b9bac6"/><rect x="4" y="0" width="1.6" height="1.6" fill="#b9bac6"/><rect x="6" y="2.6" width="1.6" height="1.6" fill="#b9bac6"/><rect x="4" y="5.2" width="1.6" height="1.6" fill="#b9bac6"/><rect x="8" y="0" width="1.6" height="1.6" fill="#b9bac6"/><rect x="10" y="2.6" width="1.6" height="1.6" fill="#b9bac6"/><rect x="8" y="5.2" width="1.6" height="1.6" fill="#b9bac6"/><rect x="12" y="0" width="1.6" height="1.6" fill="#b9bac6"/><rect x="14" y="2.6" width="1.6" height="1.6" fill="#b9bac6"/><rect x="12" y="5.2" width="1.6" height="1.6" fill="#b9bac6"/><rect x="16" y="0" width="1.6" height="1.6" fill="#b9bac6"/><rect x="18" y="2.6" width="1.6" height="1.6" fill="#b9bac6"/><rect x="16" y="5.2" width="1.6" height="1.6" fill="#b9bac6"/><rect x="20" y="0" width="1.6" height="1.6" fill="#b9bac6"/><rect x="22" y="2.6" width="1.6" height="1.6" fill="#b9bac6"/><rect x="20" y="5.2" width="1.6" height="1.6" fill="#b9bac6"/><rect x="24" y="0" width="1.6" height="1.6" fill="#b9bac6"/><rect x="26" y="2.6" width="1.6" height="1.6" fill="#b9bac6"/><rect x="24" y="5.2" width="1.6" height="1.6" fill="#b9bac6"/><rect x="28" y="0" width="1.6" height="1.6" fill="#b9bac6"/><rect x="30" y="2.6" width="1.6" height="1.6" fill="#b9bac6"/><rect x="28" y="5.2" width="1.6" height="1.6" fill="#b9bac6"/><rect x="32" y="0" width="1.6" height="1.6" fill="#b9bac6"/><rect x="34" y="2.6" width="1.6" height="1.6" fill="#b9bac6"/><rect x="32" y="5.2" width="1.6" height="1.6" fill="#b9bac6"/><rect x="36" y="0" width="1.6" height="1.6" fill="#b9bac6"/><rect x="38" y="2.6" width="1.6" height="1.6" fill="#b9bac6"/><rect x="36" y="5.2" width="1.6" height="1.6" fill="#b9bac6"/><rect x="40" y="0" width="1.6" height="1.6" fill="#b9bac6"/><rect x="42" y="2.6" width="1.6" height="1.6" fill="#b9bac6"/><rect x="40" y="5.2" width="1.6" height="1.6" fill="#b9bac6"/><rect x="44" y="0" width="1.6" height="1.6" fill="#b9bac6"/><rect x="46" y="2.6" width="1.6" height="1.6" fill="#b9bac6"/><rect x="44" y="5.2" width="1.6" height="1.6" fill="#b9bac6"/><rect x="48" y="0" width="1.6" height="1.6" fill="#b9bac6"/><rect x="50" y="2.6" width="1.6" height="1.6" fill="#b9bac6"/><rect x="48" y="5.2" width="1.6" height="1.6" fill="#b9bac6"/><rect x="52" y="0" width="1.6" height="1.6" fill="#b9bac6"/><rect x="54" y="2.6" width="1.6" height="1.6" fill="#b9bac6"/><rect x="52" y="5.2" width="1.6" height="1.6" fill="#b9bac6"/><rect x="56" y="0" width="1.6" height="1.6" fill="#b9bac6"/><rect x="58" y="2.6" width="1.6" height="1.6" fill="#b9bac6"/><rect x="56" y="5.2" width="1.6" height="1.6" fill="#b9bac6"/><rect x="60" y="0" width="1.6" height="1.6" fill="#b9bac6"/><rect x="62" y="2.6" width="1.6" height="1.6" fill="#b9bac6"/><rect x="60" y="5.2" width="1.6" height="1.6" fill="#b9bac6"/><rect x="64" y="0" width="1.6" height="1.6" fill="#b9bac6"/><rect x="66" y="2.6" width="1.6" height="1.6" fill="#b9bac6"/><rect x="64" y="5.2" width="1.6" height="1.6" fill="#b9bac6"/><rect x="68" y="0" width="1.6" height="1.6" fill="#b9bac6"/><rect x="70" y="2.6" width="1.6" height="1.6" fill="#b9bac6"/><rect x="68" y="5.2" width="1.6" height="1.6" fill="#b9bac6"/><rect x="72" y="0" width="1.6" height="1.6" fill="#b9bac6"/><rect x="74" y="2.6" width="1.6" height="1.6" fill="#b9bac6"/><rect x="72" y="5.2" width="1.6" height="1.6" fill="#b9bac6"/><rect x="76" y="0" width="1.6" height="1.6" fill="#b9bac6"/><rect x="78" y="2.6" width="1.6" height="1.6" fill="#b9bac6"/><rect x="76" y="5.2" width="1.6" height="1.6" fill="#b9bac6"/><rect x="80" y="0" width="1.6" height="1.6" fill="#b9bac6"/><rect x="82" y="2.6" width="1.6" height="1.6" fill="#b9bac6"/><rect x="80" y="5.2" width="1.6" height="1.6" fill="#b9bac6"/><rect x="84" y="0" width="1.6" height="1.6" fill="#b9bac6"/><rect x="86" y="2.6" width="1.6" height="1.6" fill="#b9bac6"/><rect x="84" y="5.2" width="1.6" height="1.6" fill="#b9bac6"/><rect x="88" y="0" width="1.6" height="1.6" fill="#b9bac6"/><rect x="90" y="2.6" width="1.6" height="1.6" fill="#b9bac6"/><rect x="88" y="5.2" width="1.6" height="1.6" fill="#b9bac6"/><rect x="92" y="0" width="1.6" height="1.6" fill="#b9bac6"/><rect x="94" y="2.6" width="1.6" height="1.6" fill="#b9bac6"/><rect x="92" y="5.2" width="1.6" height="1.6" fill="#b9bac6"/><rect x="96" y="0" width="1.6" height="1.6" fill="#b9bac6"/><rect x="98" y="2.6" width="1.6" height="1.6" fill="#b9bac6"/><rect x="96" y="5.2" width="1.6" height="1.6" fill="#b9bac6"/><rect x="100" y="0" width="1.6" height="1.6" fill="#b9bac6"/><rect x="102" y="2.6" width="1.6" height="1.6" fill="#b9bac6"/><rect x="100" y="5.2" width="1.6" height="1.6" fill="#b9bac6"/><rect x="104" y="0" width="1.6" height="1.6" fill="#b9bac6"/><rect x="106" y="2.6" width="1.6" height="1.6" fill="#b9bac6"/><rect x="104" y="5.2" width="1.6" height="1.6" fill="#b9bac6"/><rect x="108" y="0" width="1.6" height="1.6" fill="#b9bac6"/><rect x="110" y="2.6" width="1.6" height="1.6" fill="#b9bac6"/><rect x="108" y="5.2" width="1.6" height="1.6" fill="#b9bac6"/></svg>
<svg class="b" style="left:1836px;top:186px;" width="12" height="7" viewBox="0 0 12 7"><path d="M0 0 H12 L6 7 Z" fill="#1e1e1e"/></svg>
<svg class="b" style="left:1860px;top:181px;" width="13" height="17" viewBox="0 0 13 17"><path d="M3 1.5 H10 M4 1.5 V9.5 M9 1.5 V9.5 M8 1.5 V9.5 M1 10 H12 M6.5 10 V16.5" fill="none" stroke="#1e1e1e" stroke-width="1.6"/></svg>
<svg class="b" style="left:1886px;top:184px;" width="13" height="13" viewBox="0 0 13 13"><path d="M1 1 L12 12 M12 1 L1 12" stroke="#1e1e1e" stroke-width="2"/></svg>
<svg class="b" style="left:1571px;top:217px;" width="20" height="20" viewBox="0 0 20 20"><circle cx="10" cy="10" r="8.8" fill="#d2d2d7"/><path d="M14.5 10 H6 M9.8 6 L5.8 10 L9.8 14" fill="none" stroke="#f2f2f5" stroke-width="2.5"/></svg>
<svg class="b" style="left:1603px;top:217px;" width="20" height="20" viewBox="0 0 20 20"><circle cx="10" cy="10" r="8.8" fill="#d2d2d7"/><path d="M5.5 10 H14 M10.2 6 L14.2 10 L10.2 14" fill="none" stroke="#f2f2f5" stroke-width="2.5"/></svg>
<svg class="b" style="left:1634px;top:215px;" width="23" height="23" viewBox="0 0 23 23"><path d="M1.5 12 L11.5 2.5 L21.5 12" fill="none" stroke="#2b2b2b" stroke-width="2"/><path d="M4.5 10.5 V21 H18.5 V10.5" fill="none" stroke="#2b2b2b" stroke-width="2"/><rect x="9.3" y="14" width="4.4" height="7" fill="#2b2b2b"/><path d="M16.5 3 V7" stroke="#2b2b2b" stroke-width="2"/></svg>
<svg class="b" style="left:1667px;top:214px;" width="24" height="23" viewBox="0 0 24 23"><path d="M10 3.5 H15 L16 2 H22 V13 H10 Z" fill="#dcb67a"/><rect x="1.5" y="9.5" width="14" height="11" fill="#f5f5f5" stroke="#424242" stroke-width="1.6"/><path d="M1.5 11 H15.5" stroke="#424242" stroke-width="2.6"/><path d="M2.5 5.5 H8 M6 3 L8.6 5.5 L6 8" fill="none" stroke="#1a6fc4" stroke-width="1.5"/><path d="M23 18 H18 M20 15.5 L17.4 18 L20 20.5" fill="none" stroke="#1a6fc4" stroke-width="1.5"/></svg>
<svg class="b" style="left:1699.5px;top:224.0px;" width="9" height="5" viewBox="0 0 9 5"><path d="M0 0 H9 L4.5 5 Z" fill="#717171"/></svg>
<div class="b" style="left:1718px;top:213px;width:1px;height:27px;background:#cccedb;"></div>
<svg class="b" style="left:1731px;top:214px;" width="22" height="23" viewBox="0 0 22 23"><path d="M0.5 1 H8 L4.2 5.5 Z" fill="#424242"/><path d="M4.2 5 V8" stroke="#424242" stroke-width="1.4"/><circle cx="13" cy="14" r="7" fill="none" stroke="#424242" stroke-width="1.8"/><path d="M13 9.5 V14.5 H16.5" fill="none" stroke="#424242" stroke-width="1.6"/></svg>
<svg class="b" style="left:1761.5px;top:224.0px;" width="9" height="5" viewBox="0 0 9 5"><path d="M0 0 H9 L4.5 5 Z" fill="#717171"/></svg>
<svg class="b" style="left:1780px;top:216px;" width="22" height="23" viewBox="0 0 22 23"><path d="M17.6 9.5 A8 8 0 1 1 10.5 5" fill="none" stroke="#0f5fb8" stroke-width="2.6"/><path d="M9 0.5 L15.5 5 L9 9.8 Z" fill="#0f5fb8"/></svg>
<svg class="b" style="left:1814px;top:218px;" width="19" height="18" viewBox="0 0 19 18"><path d="M7 3.5 V1 H18 V9.5 H15.5 M4 7 V4.5 H15 V13 H12.5" fill="none" stroke="#424242" stroke-width="1.6"/><rect x="1" y="8" width="11" height="8.5" fill="none" stroke="#424242" stroke-width="1.6"/><path d="M3.8 12.3 H9.2" stroke="#424242" stroke-width="1.6"/></svg>
<svg class="b" style="left:1843px;top:215px;" width="25" height="24" viewBox="0 0 25 24"><path d="M5 5.5 H2.5 Q1 5.5 1 7 V17 Q1 18.5 2.5 18.5 H4" fill="none" stroke="#424242" stroke-width="1.5"/><path d="M8 4.5 V2 H17 L21 5.5 V17.5 H19" fill="none" stroke="#424242" stroke-width="1.5"/><path d="M5.5 7 H14 L18 10.5 V22.5 H5.5 Z" fill="#f5f5f5" stroke="#424242" stroke-width="1.5"/><path d="M8.5 13 H15 M8.5 16 H15 M8.5 19 H15" stroke="#424242" stroke-width="1.3"/></svg>
<div class="b" style="left:1877px;top:213px;width:1px;height:27px;background:#cccedb;"></div>
<svg class="b" style="left:1897px;top:213px;" width="10" height="6" viewBox="0 0 10 6"><path d="M1.5 0 V5 M7.5 0 V5" stroke="#444" stroke-width="1.6" stroke-dasharray="2.5 1"/></svg>
<div class="b" style="left:1559px;top:248px;width:351px;height:31px;background:#fff;border:1px solid #cccedb;box-sizing:border-box;"></div>
<div class="t " style="left:1566.40px;top:257.00px;font-size:17px;color:#6a6a6a;transform:scaleX(1.0340);">Search Solution Explorer (Ctrl+;)</div>
<svg class="b" style="left:1868px;top:253px;" width="21" height="21" viewBox="0 0 21 21"><circle cx="13" cy="7.5" r="5" fill="none" stroke="#424242" stroke-width="2.2"/><path d="M9.4 11.2 L2 18.8" stroke="#424242" stroke-width="3.2"/></svg>
<svg class="b" style="left:1895.5px;top:260.5px;" width="9" height="5" viewBox="0 0 9 5"><path d="M0 0 H9 L4.5 5 Z" fill="#717171"/></svg>
<div class="b" style="left:1559px;top:279px;width:351px;height:640px;background:#f5f5f5;"></div>
<div class="b" style="left:1559px;top:700.9px;width:326.5px;height:27.8px;background:#cccedb;"></div>
<svg class="b" style="left:1567px;top:295.2px;" width="9" height="12" viewBox="0 0 9 12"><path d="M2 5 V3.6 Q2 1 4.5 1 Q7 1 7 3.6 V5" fill="none" stroke="#2aa0e6" stroke-width="1.5"/><rect x="0.5" y="4.6" width="8" height="6" fill="#2aa0e6"/><rect x="3.5" y="6.4" width="2" height="2.2" fill="#bfe6fb"/></svg>
<svg class="b" style="left:1577.5px;top:289px;" width="23" height="22" viewBox="0 0 23 22"><rect x="0.5" y="0.4" width="21.8" height="4" fill="#3b3b3f"/><path d="M1.3 1 V9.5 M21.5 1 V17.8 H14.5" fill="none" stroke="#4a4a4e" stroke-width="1.6"/><path d="M1.9 12.6 V18.4 L10.4 11.2 V20.2 Z" fill="none" stroke="#6a2c91" stroke-width="2" stroke-linejoin="round"/><rect x="9.6" y="10.3" width="2.8" height="10.9" rx="0.8" fill="#6a2c91"/></svg>
<div class="t " style="left:1608.50px;top:293.00px;font-size:17px;color:#1e1e1e;transform:scaleX(1.0387);">Solution &#x27;ItHandyGuy.OnlineGame&#x27;</div>
<svg class="b" style="left:1575.5px;top:324.4px;" width="10" height="10" viewBox="0 0 10 10"><path d="M9.5 0.5 V9.5 H0.5 Z" fill="#1e1e1e"/></svg>
<svg class="b" style="left:1605px;top:316.4px;" width="22" height="22" viewBox="0 0 22 22"><path d="M4.5 5.5 H12 L13.5 3.5 H20.5 V17 H4.5 Z" fill="#f3e6cb" stroke="#dcb67a" stroke-width="1.3"/><path d="M0.8 18.5 L4.5 9.5 H17.5 L14.5 18.5 Z" fill="#dcb67a"/></svg>
<div class="t " style="left:1636.90px;top:321.00px;font-size:17px;color:#1e1e1e;transform:scaleX(1.0167);">Data</div>
<svg class="b" style="left:1602px;top:352.0px;" width="10" height="10" viewBox="0 0 10 10"><path d="M9.5 0.5 V9.5 H0.5 Z" fill="#1e1e1e"/></svg>
<svg class="b" style="left:1621px;top:350.0px;" width="9" height="11" viewBox="0 0 9 11"><path d="M1 6 L3.5 9.5 L8 1" fill="none" stroke="#d42c2c" stroke-width="1.9"/></svg>
<svg class="b" style="left:1632px;top:344.5px;" width="22" height="22" viewBox="0 0 22 22"><rect x="1" y="2" width="20.5" height="17.5" fill="#fafafa" stroke="#5aa85a" stroke-width="1.7"/><path d="M9.8 8.2 Q8.9 7 7.2 7 Q4.4 7 4.4 10.8 Q4.4 14.6 7.2 14.6 Q8.9 14.6 9.8 13.4" fill="none" stroke="#4a4a4a" stroke-width="1.9"/><path d="M12.6 7.3 V14 M15.4 7.3 V14 M11 9.3 H17 M11 12 H17" stroke="#4a4a4a" stroke-width="1.4"/></svg>
<div class="t " style="left:1663.40px;top:348.00px;font-size:17px;color:#1e1e1e;transform:scaleX(1.0267);">Data.Interface</div>
<svg class="b" style="left:1629px;top:376.1px;" width="9" height="15" viewBox="0 0 9 15"><path d="M1.3 1.8 L7.2 7.5 L1.3 13.2 Z" fill="none" stroke="#333" stroke-width="1.8"/></svg>
<svg class="b" style="left:1648px;top:378.0px;" width="9" height="12" viewBox="0 0 9 12"><path d="M2 5 V3.6 Q2 1 4.5 1 Q7 1 7 3.6 V5" fill="none" stroke="#2aa0e6" stroke-width="1.5"/><rect x="0.5" y="4.6" width="8" height="6" fill="#2aa0e6"/><rect x="3.5" y="6.4" width="2" height="2.2" fill="#bfe6fb"/></svg>
<svg class="b" style="left:1659px;top:371.6px;" width="22" height="22" viewBox="0 0 22 22"><path d="M19.8 4.2 L16.6 7.4 L14 6.8 L13.4 4.2 L16.6 1 Q12.6 0.2 10.6 3 Q9.2 5.4 10.4 8 L1.2 17.4 Q0.4 19.4 1.8 20.4 Q3.2 21.4 4.8 20.4 L13.8 11.2 Q17 12.2 19.2 10.2 Q21 8 19.8 4.2 Z" fill="#3b3b3f"/></svg>
<div class="t " style="left:1690.30px;top:376.00px;font-size:17px;color:#1e1e1e;transform:scaleX(1.0284);">Properties</div>
<svg class="b" style="left:1629px;top:403.7px;" width="9" height="15" viewBox="0 0 9 15"><path d="M1.3 1.8 L7.2 7.5 L1.3 13.2 Z" fill="none" stroke="#333" stroke-width="1.8"/></svg>
<svg class="b" style="left:1659px;top:398.7px;" width="22" height="22" viewBox="0 0 22 22"><rect x="0.5" y="7.5" width="6.5" height="6.5" fill="#3b3b3f"/><rect x="12.5" y="5.5" width="9" height="10" fill="#3b3b3f"/><path d="M7 10.8 H12.5" stroke="#3b3b3f" stroke-width="1.8" stroke-dasharray="2 1.2"/></svg>
<div class="t " style="left:1690.30px;top:404.00px;font-size:17px;color:#1e1e1e;transform:scaleX(0.9793);">References</div>
<svg class="b" style="left:1629px;top:431.3px;" width="9" height="15" viewBox="0 0 9 15"><path d="M1.3 1.8 L7.2 7.5 L1.3 13.2 Z" fill="none" stroke="#333" stroke-width="1.8"/></svg>
<svg class="b" style="left:1660px;top:426.8px;" width="22" height="22" viewBox="0 0 22 22"><path d="M1.5 6.2 H10 L11.8 3.5 H20.5 V19 H1.5 Z" fill="#dcb67a"/><path d="M11.2 5.6 H20.5" stroke="#ecd3a4" stroke-width="1.4"/></svg>
<div class="t " style="left:1690.30px;top:431.00px;font-size:17px;color:#1e1e1e;transform:scaleX(1.0269);">Context</div>
<svg class="b" style="left:1660px;top:454.4px;" width="22" height="22" viewBox="0 0 22 22"><path d="M1.5 6.2 H10 L11.8 3.5 H20.5 V19 H1.5 Z" fill="#dcb67a"/><path d="M11.2 5.6 H20.5" stroke="#ecd3a4" stroke-width="1.4"/></svg>
<div class="t " style="left:1690.30px;top:459.00px;font-size:17px;color:#1e1e1e;transform:scaleX(1.0400);">EntityRepository</div>
<svg class="b" style="left:1629px;top:486.5px;" width="9" height="15" viewBox="0 0 9 15"><path d="M1.3 1.8 L7.2 7.5 L1.3 13.2 Z" fill="none" stroke="#333" stroke-width="1.8"/></svg>
<svg class="b" style="left:1660px;top:482.0px;" width="22" height="22" viewBox="0 0 22 22"><path d="M1.5 6.2 H10 L11.8 3.5 H20.5 V19 H1.5 Z" fill="#dcb67a"/><path d="M11.2 5.6 H20.5" stroke="#ecd3a4" stroke-width="1.4"/></svg>
<div class="t " style="left:1690.30px;top:486.00px;font-size:17px;color:#1e1e1e;transform:scaleX(1.0676);">EntityValidator</div>
<svg class="b" style="left:1629px;top:517.6px;" width="10" height="10" viewBox="0 0 10 10"><path d="M9.5 0.5 V9.5 H0.5 Z" fill="#1e1e1e"/></svg>
<svg class="b" style="left:1659px;top:509.6px;" width="22" height="22" viewBox="0 0 22 22"><path d="M4.5 5.5 H12 L13.5 3.5 H20.5 V17 H4.5 Z" fill="#f3e6cb" stroke="#dcb67a" stroke-width="1.3"/><path d="M0.8 18.5 L4.5 9.5 H17.5 L14.5 18.5 Z" fill="#dcb67a"/></svg>
<div class="t " style="left:1690.30px;top:514.00px;font-size:17px;color:#1e1e1e;transform:scaleX(1.0375);">Repository</div>
<div class="b" style="left:1559px;top:279px;width:326.5px;height:640px;overflow:hidden;"><div class="b" style="left:-1559px;top:-279px;">
<svg class="b" style="left:1655.5px;top:541.7px;" width="9" height="15" viewBox="0 0 9 15"><path d="M1.3 1.8 L7.2 7.5 L1.3 13.2 Z" fill="none" stroke="#333" stroke-width="1.8"/></svg>
<svg class="b" style="left:1674.7px;top:544.7px;" width="9" height="9" viewBox="0 0 9 9"><path d="M4.5 0.5 V8.5 M0.5 4.5 H8.5" stroke="#3a8f3a" stroke-width="1.8"/></svg>
<svg class="b" style="left:1689.4px;top:542.2px;" width="18" height="14" viewBox="0 0 18 14"><path d="M6.9 3.4 Q6 1.9 4.4 1.9 Q1.6 1.9 1.6 6.3 Q1.6 10.6 4.4 10.6 Q6 10.6 6.9 9.1" fill="none" stroke="#3a8f3a" stroke-width="2.2"/><path d="M11.4 0.4 V7.6 M14.4 0.4 V7.6 M9.2 2.7 H16.6 M9.2 5.3 H16.6" stroke="#3a8f3a" stroke-width="1.5"/></svg>
<div class="t " style="left:1716.80px;top:542.00px;font-size:17px;color:#1e1e1e;transform:scaleX(1.0391);">IAddRepository.cs</div>
<svg class="b" style="left:1655.5px;top:569.3px;" width="9" height="15" viewBox="0 0 9 15"><path d="M1.3 1.8 L7.2 7.5 L1.3 13.2 Z" fill="none" stroke="#333" stroke-width="1.8"/></svg>
<svg class="b" style="left:1674.7px;top:572.3px;" width="9" height="9" viewBox="0 0 9 9"><path d="M4.5 0.5 V8.5 M0.5 4.5 H8.5" stroke="#3a8f3a" stroke-width="1.8"/></svg>
<svg class="b" style="left:1689.4px;top:569.8px;" width="18" height="14" viewBox="0 0 18 14"><path d="M6.9 3.4 Q6 1.9 4.4 1.9 Q1.6 1.9 1.6 6.3 Q1.6 10.6 4.4 10.6 Q6 10.6 6.9 9.1" fill="none" stroke="#3a8f3a" stroke-width="2.2"/><path d="M11.4 0.4 V7.6 M14.4 0.4 V7.6 M9.2 2.7 H16.6 M9.2 5.3 H16.6" stroke="#3a8f3a" stroke-width="1.5"/></svg>
<div class="t " style="left:1716.80px;top:569.00px;font-size:17px;color:#1e1e1e;transform:scaleX(1.0339);">IDeleteRepository.cs</div>
<svg class="b" style="left:1655.5px;top:596.9px;" width="9" height="15" viewBox="0 0 9 15"><path d="M1.3 1.8 L7.2 7.5 L1.3 13.2 Z" fill="none" stroke="#333" stroke-width="1.8"/></svg>
<svg class="b" style="left:1674.7px;top:599.9px;" width="9" height="9" viewBox="0 0 9 9"><path d="M4.5 0.5 V8.5 M0.5 4.5 H8.5" stroke="#3a8f3a" stroke-width="1.8"/></svg>
<svg class="b" style="left:1689.4px;top:597.4px;" width="18" height="14" viewBox="0 0 18 14"><path d="M6.9 3.4 Q6 1.9 4.4 1.9 Q1.6 1.9 1.6 6.3 Q1.6 10.6 4.4 10.6 Q6 10.6 6.9 9.1" fill="none" stroke="#3a8f3a" stroke-width="2.2"/><path d="M11.4 0.4 V7.6 M14.4 0.4 V7.6 M9.2 2.7 H16.6 M9.2 5.3 H16.6" stroke="#3a8f3a" stroke-width="1.5"/></svg>
<div class="t " style="left:1716.80px;top:597.00px;font-size:17px;color:#1e1e1e;transform:scaleX(1.0490);">IGetAllWithAllOthersRepository.cs</div>
<svg class="b" style="left:1655.5px;top:624.5px;" width="9" height="15" viewBox="0 0 9 15"><path d="M1.3 1.8 L7.2 7.5 L1.3 13.2 Z" fill="none" stroke="#333" stroke-width="1.8"/></svg>
<svg class="b" style="left:1674.7px;top:627.5px;" width="9" height="9" viewBox="0 0 9 9"><path d="M4.5 0.5 V8.5 M0.5 4.5 H8.5" stroke="#3a8f3a" stroke-width="1.8"/></svg>
<svg class="b" style="left:1689.4px;top:625.0px;" width="18" height="14" viewBox="0 0 18 14"><path d="M6.9 3.4 Q6 1.9 4.4 1.9 Q1.6 1.9 1.6 6.3 Q1.6 10.6 4.4 10.6 Q6 10.6 6.9 9.1" fill="none" stroke="#3a8f3a" stroke-width="2.2"/><path d="M11.4 0.4 V7.6 M14.4 0.4 V7.6 M9.2 2.7 H16.6 M9.2 5.3 H16.6" stroke="#3a8f3a" stroke-width="1.5"/></svg>
<div class="t " style="left:1716.80px;top:624.00px;font-size:17px;color:#1e1e1e;transform:scaleX(1.0402);">IGetWithAllOthersRepository.cs</div>
<svg class="b" style="left:1655.5px;top:652.1px;" width="9" height="15" viewBox="0 0 9 15"><path d="M1.3 1.8 L7.2 7.5 L1.3 13.2 Z" fill="none" stroke="#333" stroke-width="1.8"/></svg>
<svg class="b" style="left:1674.7px;top:655.1px;" width="9" height="9" viewBox="0 0 9 9"><path d="M4.5 0.5 V8.5 M0.5 4.5 H8.5" stroke="#3a8f3a" stroke-width="1.8"/></svg>
<svg class="b" style="left:1689.4px;top:652.6px;" width="18" height="14" viewBox="0 0 18 14"><path d="M6.9 3.4 Q6 1.9 4.4 1.9 Q1.6 1.9 1.6 6.3 Q1.6 10.6 4.4 10.6 Q6 10.6 6.9 9.1" fill="none" stroke="#3a8f3a" stroke-width="2.2"/><path d="M11.4 0.4 V7.6 M14.4 0.4 V7.6 M9.2 2.7 H16.6 M9.2 5.3 H16.6" stroke="#3a8f3a" stroke-width="1.5"/></svg>
<div class="t " style="left:1716.80px;top:652.00px;font-size:17px;color:#1e1e1e;transform:scaleX(1.0291);">IOnePkWithAllOthersRepository.cs</div>
<svg class="b" style="left:1655.5px;top:679.7px;" width="9" height="15" viewBox="0 0 9 15"><path d="M1.3 1.8 L7.2 7.5 L1.3 13.2 Z" fill="none" stroke="#333" stroke-width="1.8"/></svg>
<svg class="b" style="left:1674.7px;top:682.7px;" width="9" height="9" viewBox="0 0 9 9"><path d="M4.5 0.5 V8.5 M0.5 4.5 H8.5" stroke="#3a8f3a" stroke-width="1.8"/></svg>
<svg class="b" style="left:1689.4px;top:680.2px;" width="18" height="14" viewBox="0 0 18 14"><path d="M6.9 3.4 Q6 1.9 4.4 1.9 Q1.6 1.9 1.6 6.3 Q1.6 10.6 4.4 10.6 Q6 10.6 6.9 9.1" fill="none" stroke="#3a8f3a" stroke-width="2.2"/><path d="M11.4 0.4 V7.6 M14.4 0.4 V7.6 M9.2 2.7 H16.6 M9.2 5.3 H16.6" stroke="#3a8f3a" stroke-width="1.5"/></svg>
<div class="t " style="left:1716.80px;top:680.00px;font-size:17px;color:#1e1e1e;transform:scaleX(1.0329);">IRepository.cs</div>
<svg class="b" style="left:1655.5px;top:707.3px;" width="9" height="15" viewBox="0 0 9 15"><path d="M1.3 1.8 L7.2 7.5 L1.3 13.2 Z" fill="none" stroke="#333" stroke-width="1.8"/></svg>
<svg class="b" style="left:1674.7px;top:710.3px;" width="9" height="9" viewBox="0 0 9 9"><path d="M4.5 0.5 V8.5 M0.5 4.5 H8.5" stroke="#3a8f3a" stroke-width="1.8"/></svg>
<svg class="b" style="left:1689.4px;top:707.8px;" width="18" height="14" viewBox="0 0 18 14"><path d="M6.9 3.4 Q6 1.9 4.4 1.9 Q1.6 1.9 1.6 6.3 Q1.6 10.6 4.4 10.6 Q6 10.6 6.9 9.1" fill="none" stroke="#3a8f3a" stroke-width="2.2"/><path d="M11.4 0.4 V7.6 M14.4 0.4 V7.6 M9.2 2.7 H16.6 M9.2 5.3 H16.6" stroke="#3a8f3a" stroke-width="1.5"/></svg>
<div class="t " style="left:1716.80px;top:707.00px;font-size:17px;color:#1e1e1e;transform:scaleX(1.0419);">IUpdateRepository.cs</div>
</div></div>
<svg class="b" style="left:1660px;top:730.4px;" width="22" height="22" viewBox="0 0 22 22"><path d="M1.5 6.2 H10 L11.8 3.5 H20.5 V19 H1.5 Z" fill="#dcb67a"/><path d="M11.2 5.6 H20.5" stroke="#ecd3a4" stroke-width="1.4"/></svg>
<div class="t " style="left:1690.30px;top:735.00px;font-size:17px;color:#1e1e1e;transform:scaleX(1.0335);">ViewRepository</div>
<svg class="b" style="left:1648px;top:764.4px;" width="9" height="12" viewBox="0 0 9 12"><path d="M2 5 V3.6 Q2 1 4.5 1 Q7 1 7 3.6 V5" fill="none" stroke="#2aa0e6" stroke-width="1.5"/><rect x="0.5" y="4.6" width="8" height="6" fill="#2aa0e6"/><rect x="3.5" y="6.4" width="2" height="2.2" fill="#bfe6fb"/></svg>
<svg class="b" style="left:1659px;top:758.0px;" width="22" height="22" viewBox="0 0 22 22"><path d="M8 4 V1.5 H16 L20.5 6 V20 H10" fill="#fafafa" stroke="#3b3b3f" stroke-width="1.6"/><path d="M2 6 V9.6 Q2 12 4.4 12.4 V21 H6.6 V12.4 Q9 12 9 9.6 V6 H7.4 V9.4 H3.6 V6 Z" fill="#2b2b2b"/></svg>
<div class="t " style="left:1690.30px;top:762.00px;font-size:17px;color:#1e1e1e;transform:scaleX(1.0663);">App.config</div>
<svg class="b" style="left:1648px;top:792.0px;" width="9" height="12" viewBox="0 0 9 12"><path d="M2 5 V3.6 Q2 1 4.5 1 Q7 1 7 3.6 V5" fill="none" stroke="#2aa0e6" stroke-width="1.5"/><rect x="0.5" y="4.6" width="8" height="6" fill="#2aa0e6"/><rect x="3.5" y="6.4" width="2" height="2.2" fill="#bfe6fb"/></svg>
<svg class="b" style="left:1659px;top:785.6px;" width="22" height="22" viewBox="0 0 22 22"><path d="M8 4 V1.5 H16 L20.5 6 V20 H10" fill="#fafafa" stroke="#3b3b3f" stroke-width="1.6"/><path d="M2 6 V9.6 Q2 12 4.4 12.4 V21 H6.6 V12.4 Q9 12 9 9.6 V6 H7.4 V9.4 H3.6 V6 Z" fill="#2b2b2b"/></svg>
<div class="t " style="left:1690.30px;top:790.00px;font-size:17px;color:#1e1e1e;transform:scaleX(1.0360);">packages.config</div>
<svg class="b" style="left:1601.5px;top:817.7px;" width="9" height="15" viewBox="0 0 9 15"><path d="M1.3 1.8 L7.2 7.5 L1.3 13.2 Z" fill="none" stroke="#333" stroke-width="1.8"/></svg>
<svg class="b" style="left:1621px;top:819.6px;" width="9" height="12" viewBox="0 0 9 12"><path d="M2 5 V3.6 Q2 1 4.5 1 Q7 1 7 3.6 V5" fill="none" stroke="#2aa0e6" stroke-width="1.5"/><rect x="0.5" y="4.6" width="8" height="6" fill="#2aa0e6"/><rect x="3.5" y="6.4" width="2" height="2.2" fill="#bfe6fb"/></svg>
<svg class="b" style="left:1632px;top:813.7px;" width="22" height="22" viewBox="0 0 22 22"><rect x="1" y="2" width="20.5" height="17.5" fill="#fafafa" stroke="#5aa85a" stroke-width="1.7"/><path d="M9.8 8.2 Q8.9 7 7.2 7 Q4.4 7 4.4 10.8 Q4.4 14.6 7.2 14.6 Q8.9 14.6 9.8 13.4" fill="none" stroke="#4a4a4a" stroke-width="1.9"/><path d="M12.6 7.3 V14 M15.4 7.3 V14 M11 9.3 H17 M11 12 H17" stroke="#4a4a4a" stroke-width="1.4"/></svg>
<div class="t " style="left:1662.70px;top:818.00px;font-size:17px;color:#1e1e1e;transform:scaleX(1.0363);">Data.Repository</div>
<svg class="b" style="left:1575.5px;top:848.8px;" width="10" height="10" viewBox="0 0 10 10"><path d="M9.5 0.5 V9.5 H0.5 Z" fill="#1e1e1e"/></svg>
<svg class="b" style="left:1605px;top:840.8px;" width="22" height="22" viewBox="0 0 22 22"><path d="M4.5 5.5 H12 L13.5 3.5 H20.5 V17 H4.5 Z" fill="#f3e6cb" stroke="#dcb67a" stroke-width="1.3"/><path d="M0.8 18.5 L4.5 9.5 H17.5 L14.5 18.5 Z" fill="#dcb67a"/></svg>
<div class="t " style="left:1636.90px;top:845.00px;font-size:17px;color:#1e1e1e;transform:scaleX(1.0593);">DataDomain</div>
<svg class="b" style="left:1602px;top:876.4px;" width="10" height="10" viewBox="0 0 10 10"><path d="M9.5 0.5 V9.5 H0.5 Z" fill="#1e1e1e"/></svg>
<svg class="b" style="left:1621px;top:874.8px;" width="9" height="12" viewBox="0 0 9 12"><path d="M2 5 V3.6 Q2 1 4.5 1 Q7 1 7 3.6 V5" fill="none" stroke="#2aa0e6" stroke-width="1.5"/><rect x="0.5" y="4.6" width="8" height="6" fill="#2aa0e6"/><rect x="3.5" y="6.4" width="2" height="2.2" fill="#bfe6fb"/></svg>
<svg class="b" style="left:1632px;top:868.9px;" width="22" height="22" viewBox="0 0 22 22"><rect x="1" y="2" width="20.5" height="17.5" fill="#fafafa" stroke="#5aa85a" stroke-width="1.7"/><path d="M9.8 8.2 Q8.9 7 7.2 7 Q4.4 7 4.4 10.8 Q4.4 14.6 7.2 14.6 Q8.9 14.6 9.8 13.4" fill="none" stroke="#4a4a4a" stroke-width="1.9"/><path d="M12.6 7.3 V14 M15.4 7.3 V14 M11 9.3 H17 M11 12 H17" stroke="#4a4a4a" stroke-width="1.4"/></svg>
<div class="t " style="left:1662.70px;top:873.00px;font-size:17px;color:#1e1e1e;transform:scaleX(1.0533);">DataDomain.Entity</div>
<div class="b" style="left:1886px;top:279px;width:24px;height:640px;background:#f5f5f5;"></div>
<svg class="b" style="left:1891px;top:295.5px;" width="14" height="8" viewBox="0 0 14 8"><path d="M0 8 L7 0.5 L14 8 Z" fill="#8b8b96"/></svg>
<div class="b" style="left:1892px;top:311.5px;width:12.5px;height:270.5px;background:#c2c3c9;"></div>
<svg class="b" style="left:1891.5px;top:877.5px;" width="14" height="8" viewBox="0 0 14 8"><path d="M0 0 H14 L7 7.5 Z" fill="#8b8b96"/></svg>
<div class="b" style="left:1559px;top:895px;width:327px;height:24px;background:#f5f5f5;"></div>
<svg class="b" style="left:1568.5px;top:900px;" width="7" height="13" viewBox="0 0 7 13"><path d="M7 0 V13 L0.5 6.5 Z" fill="#8b8b96"/></svg>
<div class="b" style="left:1584px;top:900px;width:210px;height:13px;background:#c2c3c9;"></div>
<svg class="b" style="left:1869.5px;top:900px;" width="7" height="13" viewBox="0 0 7 13"><path d="M0 0 V13 L6.5 6.5 Z" fill="#8b8b96"/></svg>
<div class="b" style="left:1558px;top:918.5px;width:178px;height:1px;background:#cccedb;"></div>
<div class="b" style="left:1794px;top:918.5px;width:118px;height:1px;background:#cccedb;"></div>
<div class="b" style="left:1736px;top:919px;width:58px;height:29px;background:#f5f5f5;border:1px solid #cccedb;border-top:none;box-sizing:border-box;"></div>
<svg class="b" style="left:1577px;top:925px;" width="22" height="23" viewBox="0 0 22 23"><path d="M2 2 H13 V11 Q13 17 7.5 20.5 Q2 17 2 11 Z" fill="#3b3b3f"/><circle cx="15.5" cy="16.5" r="5" fill="#4aa84a" stroke="#eeeef2" stroke-width="1.2"/><path d="M13.5 16.5 H17.5 M15.5 14.5 V18.5" stroke="#fff" stroke-width="0"/></svg>
<svg class="b" style="left:1635px;top:925px;" width="25" height="23" viewBox="0 0 25 23"><circle cx="15" cy="11" r="5.5" fill="none" stroke="#3c8fc0" stroke-width="1.9"/><path d="M11 15.5 L6.5 20.5" stroke="#3c8fc0" stroke-width="2.4"/><path d="M1 5.5 H12 M8 3 L11.8 5.5 L8 8" fill="none" stroke="#424242" stroke-width="1.6"/><path d="M22 7 Q23.5 11 21 15" fill="none" stroke="#3c8fc0" stroke-width="1.4"/></svg>
<svg class="b" style="left:1694px;top:925px;" width="23" height="23" viewBox="0 0 23 23"><path d="M19.8 4.2 L16.6 7.4 L14 6.8 L13.4 4.2 L16.6 1 Q12.6 0.2 10.6 3 Q9.2 5.4 10.4 8 L1.2 17.4 Q0.4 19.4 1.8 20.4 Q3.2 21.4 4.8 20.4 L13.8 11.2 Q17 12.2 19.2 10.2 Q21 8 19.8 4.2 Z" fill="#2b2b2b"/></svg>
<svg class="b" style="left:1753.2px;top:922.9px;" width="24" height="23" viewBox="0 0 23 22"><rect x="0.5" y="0.4" width="21.8" height="4" fill="#3b3b3f"/><path d="M1.3 1 V9.5 M21.5 1 V17.8 H14.5" fill="none" stroke="#4a4a4e" stroke-width="1.6"/><path d="M1.9 12.6 V18.4 L10.4 11.2 V20.2 Z" fill="none" stroke="#6a2c91" stroke-width="2" stroke-linejoin="round"/><rect x="9.6" y="10.3" width="2.8" height="10.9" rx="0.8" fill="#6a2c91"/></svg>
<svg class="b" style="left:1813px;top:925px;" width="24" height="23" viewBox="0 0 24 23"><circle cx="8" cy="5.5" r="3.6" fill="#2b2b2b"/><path d="M1.5 21 V14 Q1.5 10.5 8 10.5 Q12 10.5 13 12.5 V21 Z" fill="#2b2b2b"/><circle cx="17" cy="9" r="3.2" fill="#2b2b2b"/><path d="M11.5 21 V16.5 Q11.5 13.5 17 13.5 Q22.5 13.5 22.5 16.5 V21 Z" fill="#2b2b2b" stroke="#eeeef2" stroke-width="1"/></svg>
<svg class="b" style="left:1871px;top:924px;" width="25" height="25" viewBox="0 0 25 25"><path d="M8.5 2 L15 8.5 L8.5 15 L2 8.5 Z" fill="#2b2b2b"/><path d="M13 8.5 H21 M17 8.5 V20 H22 M19.5 5.5 L22.5 8.5 L19.5 11.5 M19.5 17 L22.5 20 L19.5 23" fill="none" stroke="#2b2b2b" stroke-width="1.7"/></svg>
</body></html>
